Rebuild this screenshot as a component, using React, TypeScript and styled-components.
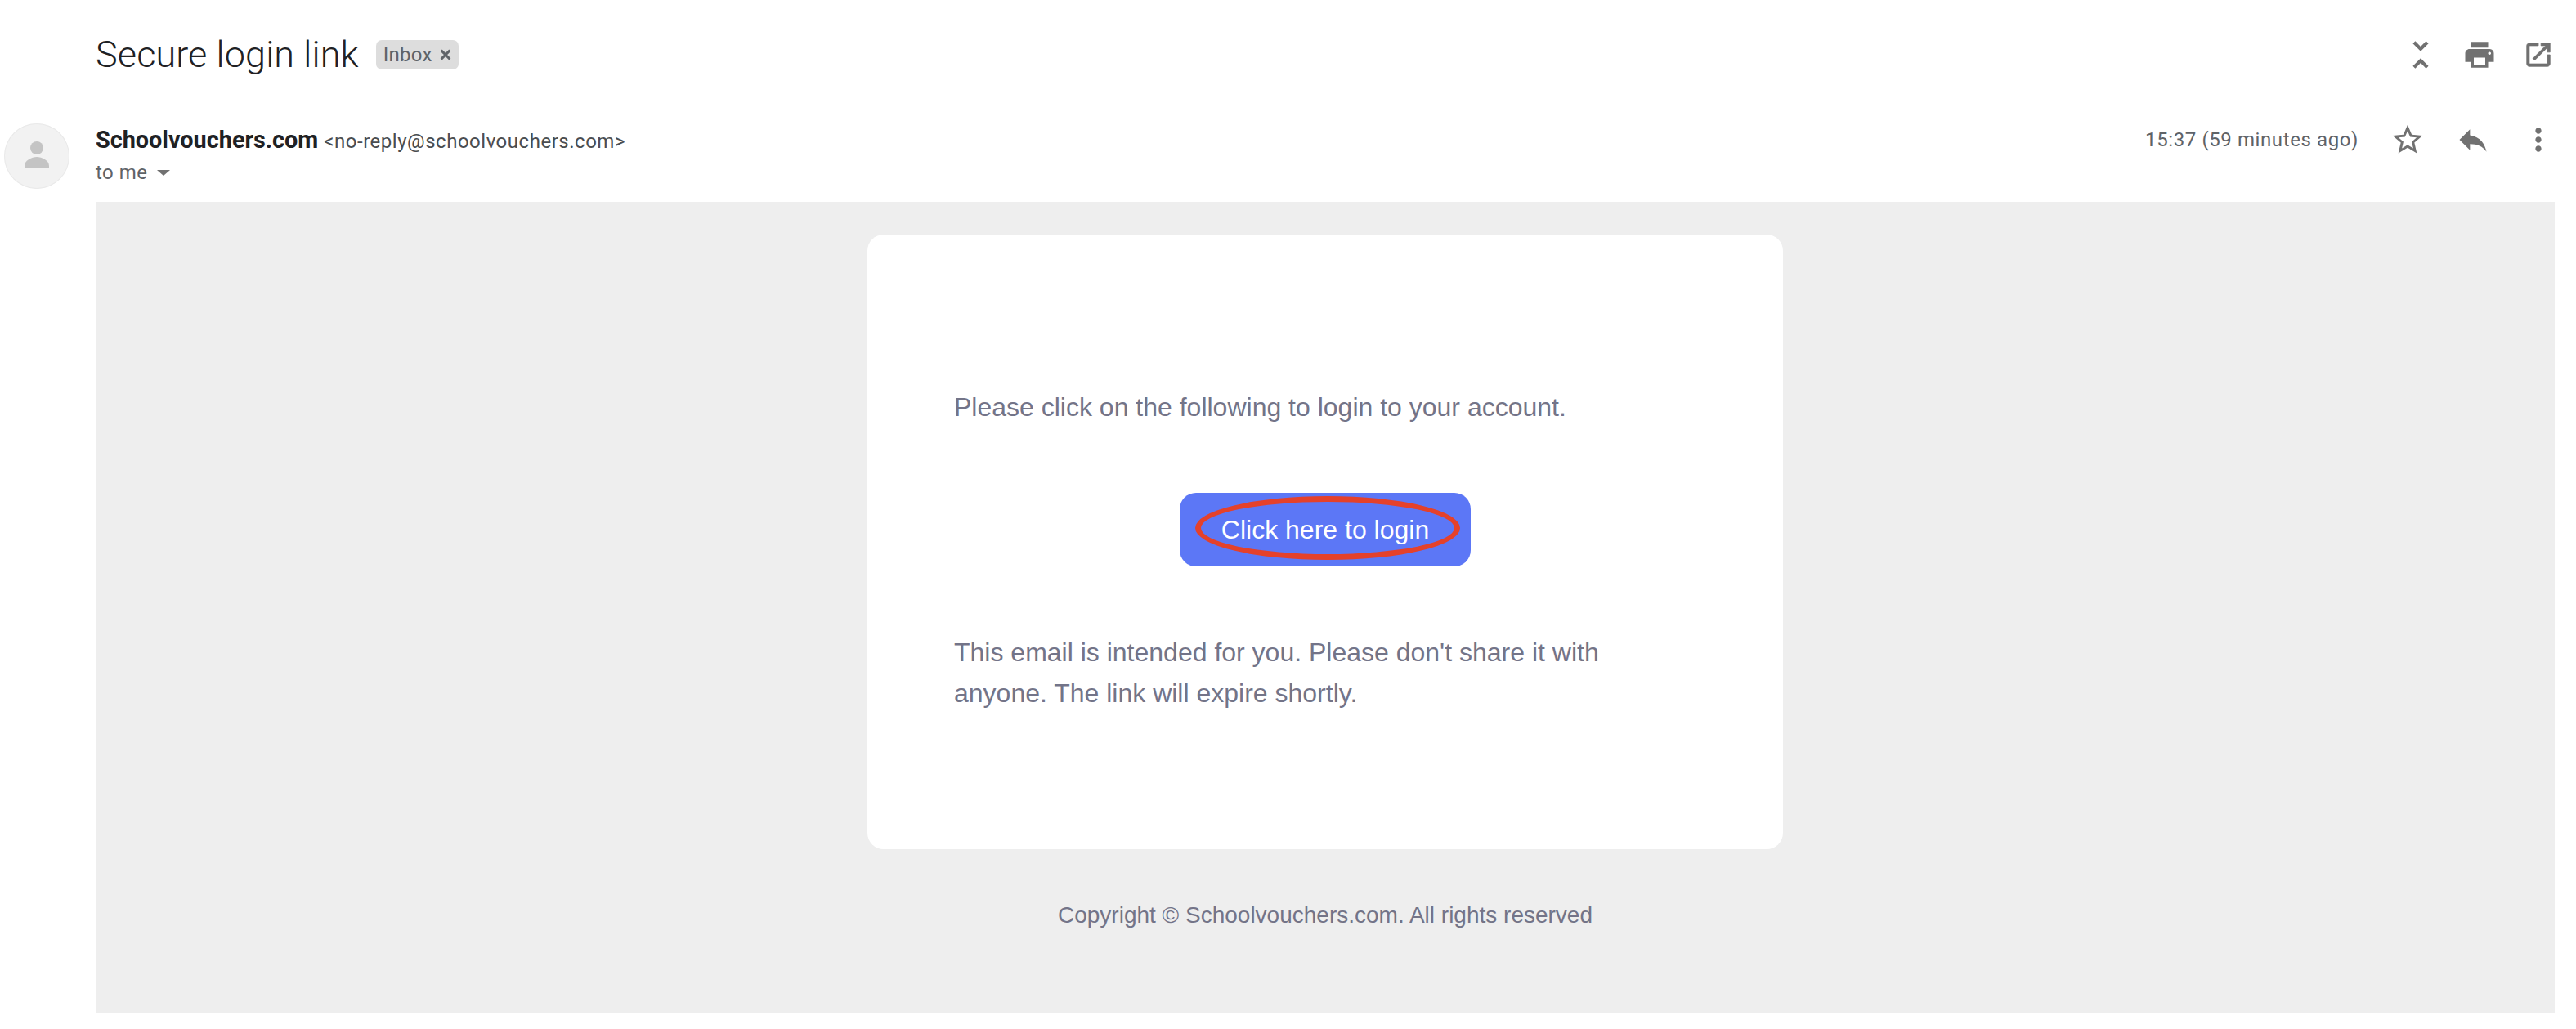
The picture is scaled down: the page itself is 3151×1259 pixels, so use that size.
import React from "react";
import styled, { createGlobalStyle } from "styled-components";

const Global = createGlobalStyle`
  html, body { margin: 0; padding: 0; background: #fff; }
  body { font-family: Roboto, "Liberation Sans", sans-serif; }
`;

const Page = styled.div`
  width: 3151px;
  height: 1259px;
  display: grid;
  grid-template-columns: 117px 1fr;
  grid-template-rows: 134px 113px 992px;
  padding-right: 26px;
  box-sizing: border-box;
  overflow: hidden;
`;

const SubjectRow = styled.div`
  grid-column: 2;
  display: flex;
  align-items: center;
  justify-content: space-between;
`;

const SubjectGroup = styled.div`
  display: flex;
  align-items: center;
  gap: 21px;
`;

const Subject = styled.h1`
  margin: 0;
  font: 300 45px/60px Roboto, sans-serif;
  letter-spacing: 0.1px;
  color: #202124;
`;

const Chip = styled.span`
  display: inline-flex;
  align-items: center;
  gap: 8px;
  height: 36px;
  padding: 0 8px 0 9px;
  background: #dddddd;
  border-radius: 7px;
  font: 400 24px/36px Roboto, sans-serif;
  letter-spacing: 0.3px;
  color: #5f6368;
`;

const ChipClose = styled.svg`
  width: 16px;
  height: 16px;
`;

const IconRow = styled.div<{ $gap: number }>`
  display: flex;
  align-items: center;
  gap: ${(p) => p.$gap}px;
`;

const IconSlot = styled.span`
  width: 40px;
  height: 40px;
  display: flex;
  align-items: center;
  justify-content: center;
`;

const Icon = styled.svg<{ $size: number }>`
  width: ${(p) => p.$size}px;
  height: ${(p) => p.$size}px;
  flex: none;
  fill: #717171;
  display: block;
`;

const AvatarCell = styled.div`
  grid-column: 1;
  padding: 17px 0 0 5px;
`;

const Avatar = styled.div`
  width: 80px;
  height: 80px;
  border-radius: 50%;
  background: #f2f2f2;
  box-shadow: inset 0 0 0 1px #e9e9e9;
`;

const AvatarIcon = styled.svg`
  width: 80px;
  height: 80px;
  display: block;
  fill: #c4c4c4;
`;

const SenderRow = styled.div`
  grid-column: 2;
  display: flex;
  justify-content: space-between;
  align-items: flex-start;
  padding-top: 18px;
`;

const SenderInfo = styled.div`
  display: flex;
  flex-direction: column;
`;

const SenderLine = styled.div`
  display: flex;
  align-items: baseline;
  gap: 7px;
  height: 38px;
  line-height: 38px;
`;

const SenderName = styled.span`
  font: 700 28.8px/38px Roboto, sans-serif;
  color: #202124;
`;

const SenderEmail = styled.span`
  font: 400 24px/38px Roboto, sans-serif;
  letter-spacing: 0.52px;
  color: #4a4d51;
`;

const ToLine = styled.div`
  display: flex;
  align-items: center;
  gap: 11px;
  height: 42px;
  font: 400 24px/42px Roboto, sans-serif;
  letter-spacing: 0.5px;
  color: #5f6368;
`;

const Caret = styled.span`
  width: 0;
  height: 0;
  border-left: 8px solid transparent;
  border-right: 8px solid transparent;
  border-top: 7px solid #717171;
`;

const MetaRow = styled.div`
  display: flex;
  align-items: center;
  height: 38px;
`;

const Time = styled.span`
  font: 400 24px/38px Roboto, sans-serif;
  letter-spacing: 0.6px;
  color: #5f6368;
  margin-right: 40px;
`;

const Panel = styled.div`
  grid-column: 2;
  background: #eeeeee;
  padding-top: 40px;
  display: flex;
  flex-direction: column;
  align-items: center;
  font-family: "Liberation Sans", Arial, sans-serif;
`;

const Card = styled.div`
  width: 1120px;
  height: 752px;
  box-sizing: border-box;
  background: #fff;
  border-radius: 20px;
  padding: 186px 106px 0;
  display: flex;
  flex-direction: column;
`;

const Paragraph = styled.p`
  margin: 0;
  font-size: 32px;
  line-height: 50px;
  color: #737488;
`;

const LoginButton = styled.a`
  position: relative;
  align-self: center;
  margin: 80px 0;
  width: 356px;
  height: 90px;
  border-radius: 20px;
  background: #5c77f6;
  color: #fff;
  font-size: 32px;
  line-height: 90px;
  text-align: center;
`;

const Annotation = styled.span`
  position: absolute;
  left: 19px;
  right: 13px;
  top: 4px;
  bottom: 8px;
  border: 7px solid #e4412b;
  border-radius: 50%;
  box-sizing: border-box;
`;

const Copyright = styled.p`
  margin: 61px 0 0;
  font-size: 28px;
  line-height: 40px;
  color: #737488;
`;

export default function App() {
  return (
    <>
      <Global />
      <Page>
        <SubjectRow>
          <SubjectGroup>
            <Subject>Secure login link</Subject>
            <Chip>
              Inbox
              <ChipClose viewBox="0 0 15 15">
                <path d="M2.500 2.500l10 10M12.500 2.500l-10 10" stroke="#5f6368" strokeWidth="2.800" fill="none" />
              </ChipClose>
            </Chip>
          </SubjectGroup>
          <IconRow $gap={32}>
            <IconSlot>
              <Icon $size={50} viewBox="0 0 24 24">
                <path d="M7.410 18.590L8.830 20 12 16.830 15.170 20l1.410-1.410L12 14l-4.590 4.590zm9.180-13.180L15.170 4 12 7.170 8.830 4 7.410 5.410 12 10l4.590-4.590z" />
              </Icon>
            </IconSlot>
            <IconSlot>
              <Icon $size={42} viewBox="0 0 24 24">
                <path d="M19 8H5c-1.660 0-3 1.340-3 3v6h4v4h12v-4h4v-6c0-1.660-1.340-3-3-3zm-3 11H8v-5h8v5zm3-7c-.55 0-1-.45-1-1s.45-1 1-1 1 .45 1 1-.45 1-1 1zm-1-9H6v4h12V3z" />
              </Icon>
            </IconSlot>
            <IconSlot>
              <Icon $size={38} viewBox="0 0 24 24">
                <path d="M19 19H5V5h7V3H5c-1.110 0-2 .9-2 2v14c0 1.100.89 2 2 2h14c1.100 0 2-.9 2-2v-7h-2v7zM14 3v2h3.590l-9.830 9.830 1.410 1.410L19 6.410V10h2V3h-7z" stroke="#717171" strokeWidth="0.5" />
              </Icon>
            </IconSlot>
          </IconRow>
        </SubjectRow>

        <AvatarCell>
          <Avatar>
            <AvatarIcon viewBox="0 0 80 80">
              <circle cx="40" cy="30" r="8" />
              <path d="M25 55v-3c0-7 9-11 15-11s15 4 15 11v3z" />
            </AvatarIcon>
          </Avatar>
        </AvatarCell>

        <SenderRow>
          <SenderInfo>
            <SenderLine>
              <SenderName>Schoolvouchers.com</SenderName>
              <SenderEmail>&lt;no-reply@schoolvouchers.com&gt;</SenderEmail>
            </SenderLine>
            <ToLine>
              to me
              <Caret />
            </ToLine>
          </SenderInfo>
          <MetaRow>
            <Time>15:37 (59 minutes ago)</Time>
            <IconRow $gap={40}>
              <IconSlot>
                <Icon $size={44} viewBox="0 0 24 24">
                  <path d="M22 9.240l-7.190-.62L12 2 9.190 8.630 2 9.240l5.460 4.730L5.820 21 12 17.270 18.180 21l-1.630-7.030L22 9.240zM12 15.400l-3.760 2.270 1-4.280-3.320-2.880 4.380-.38L12 6.100l1.710 4.040 4.380.38-3.320 2.880 1 4.280L12 15.400z" />
                </Icon>
              </IconSlot>
              <IconSlot>
                <Icon $size={44} viewBox="0 0 24 24">
                  <path d="M10 9V5l-7 7 7 7v-4.100c5 0 8.500 1.600 11 5.100-1-5-4-10-11-11z" />
                </Icon>
              </IconSlot>
              <IconSlot>
                <Icon $size={44} viewBox="0 0 24 24">
                  <path d="M12 8c1.100 0 2-.9 2-2s-.9-2-2-2-2 .9-2 2 .9 2 2 2zm0 2c-1.100 0-2 .9-2 2s.9 2 2 2 2-.9 2-2-.9-2-2-2zm0 6c-1.100 0-2 .9-2 2s.9 2 2 2 2-.9 2-2-.9-2-2-2z" />
                </Icon>
              </IconSlot>
            </IconRow>
          </MetaRow>
        </SenderRow>

        <Panel>
          <Card>
            <Paragraph>Please click on the following to login to your account.</Paragraph>
            <LoginButton>
              Click here to login
              <Annotation />
            </LoginButton>
            <Paragraph>This email is intended for you. Please don't share it with anyone. The link will expire shortly.</Paragraph>
          </Card>
          <Copyright>Copyright © Schoolvouchers.com. All rights reserved</Copyright>
        </Panel>
      </Page>
    </>
  );
}
